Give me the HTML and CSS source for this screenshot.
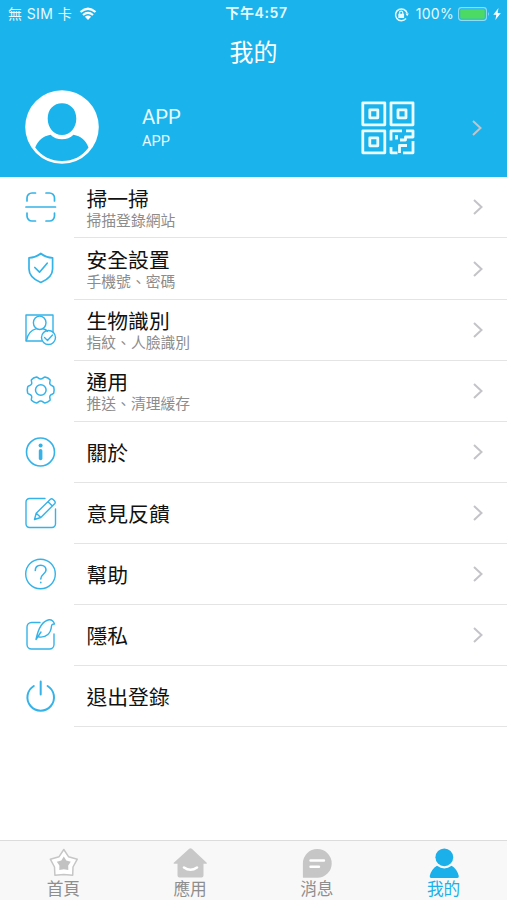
FILE: index.html
```html
<!DOCTYPE html>
<html lang="zh-Hant">
<head>
<meta charset="utf-8">
<meta name="viewport" content="width=device-width, initial-scale=1">
<title>我的</title>
<link rel="stylesheet" href="styles.css">
</head>
<body>
<div class="app">
  <header class="header">
    <div class="status">
      <div class="status-left">
        <span class="carrier">無 SIM 卡</span>
        <svg class="wifi" viewBox="0 0 18 14"><path d="M1.500 5Q9-1.500 16.500 5M4 8Q9 3.800 14 8" fill="none" stroke="currentColor" stroke-width="2.200"/><path d="M5.900 9.800Q9 7.300 12.100 9.800L9 13z" fill="currentColor"/></svg>
      </div>
      <div class="status-time">下午4:57</div>
      <div class="status-right">
        <svg class="lock" viewBox="0 0 14 14"><path d="M12.300 6A5.500 5.500 0 1 0 11.200 10.800" fill="none" stroke="currentColor" stroke-width="1.400"/><path d="M10.700 6h3.200l-1.600 2.700zM4 6.300h5.400v4H4z" fill="currentColor"/><path d="M5.200 7V5.300a1.500 1.500 0 0 1 3 0V7" fill="none" stroke="currentColor" stroke-width="1.100"/></svg>
        <span class="percent">100%</span>
        <svg class="battery" viewBox="0 0 32 14"><rect x=".6" y=".6" width="27.800" height="12.800" rx="2.800" fill="none" stroke="#8fdcf8" stroke-width="1.100"/><rect x="2.200" y="2.200" width="24.600" height="9.600" rx="1.200" fill="#4cd964"/><path d="M30 4.800q1.800 2.200 0 4.400z" fill="#8fdcf8"/></svg>
        <svg class="bolt" viewBox="0 0 8 12"><path d="M5.500 0L.3 6.700h3L2.400 12 7.800 5H4.600z" fill="currentColor"/></svg>
      </div>
    </div>
    <h1 class="page-title">我的</h1>
    <div class="profile">
      <svg class="avatar" viewBox="0 0 74 74"><circle cx="37" cy="37" r="36.800" fill="#fff"/><path d="M37 13.200c8.300 0 14.300 6 14.300 15.300S45.200 45 37 45s-14.300-7.200-14.300-16.500S28.700 13.200 37 13.200zM25.500 44.700C28.500 48 32.500 49.300 37 49.300s8.500-1.300 11.500-4.600C56 46 61 50.500 63.500 57.500 57 66.500 48 71 37 71S17 66.500 10.200 57.500C13 50.500 18 46 25.500 44.700z" fill="#1bb3ec"/></svg>
      <div class="profile-text">
        <div class="profile-name">APP</div>
        <div class="profile-sub">APP</div>
      </div>
      <svg class="qr" viewBox="0 0 54 54" fill="none" stroke="#eafcff" stroke-width="2.800" stroke-linejoin="round"><rect x="1.800" y="1.800" width="22" height="22"/><rect x="8.800" y="8.800" width="8" height="8"/><rect x="30" y="1.800" width="22" height="22"/><rect x="37" y="8.800" width="8" height="8"/><rect x="1.800" y="29.800" width="22" height="22"/><rect x="8.800" y="36.800" width="8" height="8"/><path d="M41 29.800H30V39.500M35.500 34v4.500M45 29.800h7V36h-7.500v3H39M52 40v11.800H42M30 46v5.800h6.500M38.500 52V44.500H46"/></svg>
      <svg class="chevron" viewBox="0 0 10 16"><path d="M1 1l7.500 7L1 15"/></svg>
    </div>
  </header>

  <main class="menu">
    <div class="row">
      <svg class="icon" viewBox="0 0 36 36"><path d="M3 18h29.500" stroke-width="1.700"/><path d="M4 12V9a5 5 0 0 1 5-5h3.500M23 4h3.500a5 5 0 0 1 5 5v3M4 24v3a5 5 0 0 0 5 5h3.500M23 32h3.500a5 5 0 0 0 5-5v-3" stroke-width="1.700"/></svg>
      <div class="row-body"><div class="labels"><div class="label">掃一掃</div><div class="sub">掃描登錄網站</div></div><svg class="chevron" viewBox="0 0 10 16"><path d="M1 1l7.500 7L1 15"/></svg></div>
    </div>
    <div class="row">
      <svg class="icon" viewBox="0 0 36 36"><path d="M17.800 3.500C14 6.500 10 7.700 6 7.800V19c0 6.500 4.500 10.500 11.800 13.500C25 29.500 29.600 25.500 29.600 19V7.800C25.500 7.700 21.500 6.500 17.800 3.500z" stroke-width="1.700"/><path d="M11.800 17.500l4.700 4.700 7.700-9" stroke-width="1.700"/></svg>
      <div class="row-body"><div class="labels"><div class="label">安全設置</div><div class="sub">手機號、密碼</div></div><svg class="chevron" viewBox="0 0 10 16"><path d="M1 1l7.500 7L1 15"/></svg></div>
    </div>
    <div class="row">
      <svg class="icon" viewBox="0 0 36 36"><path d="M19 30H3V4h27v17"/><ellipse cx="16.700" cy="11.800" rx="6.300" ry="6.700"/><path d="M3.500 29.500C4.500 22.500 8 19.300 13.500 17.700M20 17.700q3 .8 4.500 2.500"/><circle cx="25.500" cy="26.500" r="7"/><path d="M21.500 26.500l3 3 5-5.500"/></svg>
      <div class="row-body"><div class="labels"><div class="label">生物識別</div><div class="sub">指紋、人臉識別</div></div><svg class="chevron" viewBox="0 0 10 16"><path d="M1 1l7.500 7L1 15"/></svg></div>
    </div>
    <div class="row">
      <svg class="icon" viewBox="0 0 36 36"><path d="M13.500 5C15 5 15.500 7 17.700 7S20.500 5 22 5C24 5.400 26 6.500 27 7.700 27.700 9 26 10.500 27 12.200S30 13.500 30.700 14.800C31.300 17 31.300 19 30.700 21.200 30 22.500 28 22 27 23.800S27.700 27 27 28.300C26 29.500 24 30.600 22 31 20.500 31 19.900 29 17.700 29S15 31 13.500 31C11.500 30.600 9.500 29.500 8.500 28.300 7.700 27 9.500 25.500 8.500 23.800S5.500 22.500 4.700 21.200C4.100 19 4.100 17 4.700 14.800 5.500 13.500 7.500 14 8.500 12.200S7.700 9 8.500 7.700C9.500 6.500 11.500 5.400 13.500 5z" stroke-width="1.500"/><circle cx="17.800" cy="18" r="5.300" stroke-width="1.500"/></svg>
      <div class="row-body"><div class="labels"><div class="label">通用</div><div class="sub">推送、清理緩存</div></div><svg class="chevron" viewBox="0 0 10 16"><path d="M1 1l7.500 7L1 15"/></svg></div>
    </div>
    <div class="row">
      <svg class="icon" viewBox="0 0 36 36"><circle cx="17.500" cy="18" r="14" stroke-width="1.600"/><circle cx="17.600" cy="11.500" r="2" fill="#2fb3e8" stroke="none"/><path d="M17.600 16.800v7.700" stroke-width="3.600"/></svg>
      <div class="row-body"><div class="labels"><div class="label">關於</div></div><svg class="chevron" viewBox="0 0 10 16"><path d="M1 1l7.500 7L1 15"/></svg></div>
    </div>
    <div class="row">
      <svg class="icon" viewBox="0 0 36 36"><path d="M22 3.500H6.500A3.500 3.500 0 0 0 3 7v22a3.500 3.500 0 0 0 3.500 3.500H29a3.500 3.500 0 0 0 3.500-3.500V14"/><path d="M11.500 24.500l1.700-6.300L27.400 4.300q1.300-1 2.700.2l1.500 1.600q1.200 1.300 0 2.600L17.800 22.500zM13.200 18.200l4.600 4.300M25 6.700l4.400 4.200"/></svg>
      <div class="row-body"><div class="labels"><div class="label">意見反饋</div></div><svg class="chevron" viewBox="0 0 10 16"><path d="M1 1l7.500 7L1 15"/></svg></div>
    </div>
    <div class="row">
      <svg class="icon" viewBox="0 0 36 36"><circle cx="17.500" cy="18" r="14.800"/><path d="M12.300 14.500c0-3.300 2.200-5.300 5.400-5.300s5.300 2 5.300 4.700c0 4-5.200 4.300-5.200 9M17.800 26.200v.6" stroke-width="1.600"/></svg>
      <div class="row-body"><div class="labels"><div class="label">幫助</div></div><svg class="chevron" viewBox="0 0 10 16"><path d="M1 1l7.500 7L1 15"/></svg></div>
    </div>
    <div class="row">
      <svg class="icon" viewBox="0 0 36 36"><path d="M17 5.500H8.500A4.500 4.500 0 0 0 4 10v17.500A4.500 4.500 0 0 0 8.500 32h18a4.500 4.500 0 0 0 4.500-4.500V17"/><path d="M13 22.500C15 13 19 4 26 2.800q4-.3 5.500 4.200-2.700-.2-3 2C28 16 23.500 21 16 20M13 22.500L18 15"/></svg>
      <div class="row-body"><div class="labels"><div class="label">隱私</div></div><svg class="chevron" viewBox="0 0 10 16"><path d="M1 1l7.500 7L1 15"/></svg></div>
    </div>
    <div class="row">
      <svg class="icon" viewBox="0 0 36 36"><path d="M10.800 8A13.300 13.300 0 1 0 24.600 8M17.700 3.500v13" stroke-width="2"/></svg>
      <div class="row-body"><div class="labels"><div class="label">退出登錄</div></div></div>
    </div>
  </main>

  <nav class="tabs">
    <div class="tab">
      <svg class="tab-icon" viewBox="0 0 34 32"><path d="M17.800 2.500L22.500 9.700 31.300 12.200 27 20 26.700 28.300 17.800 27.500 8.900 28.300 8.500 20 4.300 12.200 13.100 9.700z" fill="#fff" stroke="#c6c6c6" stroke-width="1.500" stroke-linejoin="round"/><path d="M17.800 9.500l2.500 3.900 4.500 1.300-2.600 3.900.1 4.500-4.500-.9-4.500.9.100-4.500-2.600-3.900 4.500-1.300z" fill="#c2c2c2"/></svg>
      <span>首頁</span>
    </div>
    <div class="tab">
      <svg class="tab-icon" viewBox="0 0 34 32"><path d="M16.200 1.700q1.300-1 2.600 0L34 16q0 .8-.8.800h-2.700v11.700q0 2-2 2h-22q-2 0-2-2V16.800H1.300q-.8 0-.8-.8z" fill="#c8c8c8"/><path d="M11 20.500q6.500 4.500 13 0" fill="none" stroke="#fff" stroke-width="2.600" stroke-linecap="round"/></svg>
      <span>應用</span>
    </div>
    <div class="tab">
      <svg class="tab-icon" viewBox="0 0 34 32"><path d="M17.300 2A14.400 14.400 0 1 1 17.300 30.800H3.400q-.5 0-.5-.5V16.400A14.400 14.400 0 0 1 17.300 2z" fill="#c6c6c6"/><path d="M10.500 13.500H24M10.500 19.700h8.500" stroke="#fff" stroke-width="2.400" stroke-linecap="round"/></svg>
      <span>消息</span>
    </div>
    <div class="tab active">
      <svg class="tab-icon" viewBox="0 0 34 32"><circle cx="17.300" cy="10.300" r="8.900" fill="#1bb0e9"/><path d="M10 18.800Q17.300 24 24.600 18.800 30 22 31.800 29q.2 2-1.500 2H4.200q-1.700 0-1.500-2Q4.500 22 10 18.800z" fill="#1bb0e9"/></svg>
      <span>我的</span>
    </div>
  </nav>
</div>
</body>
</html>
```
FILE: styles.css
```css
* { box-sizing: border-box; }
body {
  margin: 0;
  background: #fff;
  font-family: "Noto Sans CJK TC", "Noto Sans", sans-serif;
  color: #111;
}
svg { display: block; flex: none; }
.app {
  width: 507px;
  height: 900px;
  display: flex;
  flex-direction: column;
  overflow: hidden;
}
.header {
  height: 177px;
  flex: none;
  background: #1bb3ec;
  color: #fff;
}
.status {
  height: 28px;
  display: grid;
  grid-template-columns: 1fr auto 1fr;
  align-items: center;
  padding: 0 6px 0 8px;
  font-family: Inter, "Noto Sans CJK TC", sans-serif;
  font-size: 14px;
  line-height: 20px;
  color: #e6faff;
}
.status-left, .status-right { display: flex; align-items: center; height: 26px; }
.status-right { justify-content: flex-end; }
.carrier { letter-spacing: 0.4px; }
.wifi { width: 18px; height: 14px; margin-left: 7px; color: #fff; }
.status-time { font-weight: 600; letter-spacing: 0.6px; margin: -2px 0 0 4px; }
.lock { width: 15px; height: 15px; margin-right: 7px; }
.percent { letter-spacing: 0.3px; }
.battery { width: 32px; height: 14px; margin-left: 4px; }
.bolt { width: 8px; height: 12px; margin-left: 3px; color: #fff; }
.page-title {
  margin: 0;
  height: 45px;
  line-height: 45px;
  font-size: 24px;
  font-weight: 400;
  text-align: center;
}
.profile {
  height: 104px;
  display: flex;
  align-items: center;
  padding: 5px 25px 0 25px;
}
.avatar { width: 74px; height: 74px; margin-bottom: 1px; }
.profile-text {
  flex: 1;
  padding: 1px 0 0 43px;
  font-family: Roboto, sans-serif;
  color: #e6faff;
}
.profile-name { font-size: 20.3px; line-height: 26px; }
.profile-sub { font-size: 14.6px; line-height: 23px; }
.qr { width: 54px; height: 54px; margin: 1px 57px 0 0; }
.chevron {
  width: 10px;
  height: 16px;
  fill: none;
  stroke: #c4c4c8;
  stroke-width: 2;
}
.menu { flex: 1; padding-top: 0.4px; }
.row { height: 61.1px; display: flex; align-items: center; }
.icon {
  width: 36px;
  height: 36px;
  margin: 0 15px 1.5px 23px;
  fill: none;
  stroke: #35b3e8;
  stroke-width: 1.4;
  stroke-linecap: round;
  stroke-linejoin: round;
}
.row-body {
  flex: 1;
  height: 100%;
  display: flex;
  align-items: center;
  justify-content: space-between;
  padding: 0 24.5px 0 12.5px;
  border-bottom: 1px solid #e4e4e4;
}
.label { font-size: 20.8px; line-height: 24px; }
.sub { font-size: 14.8px; line-height: 19px; color: #8c8c8c; }
.tabs {
  height: 60px;
  flex: none;
  display: grid;
  grid-template-columns: repeat(4, 1fr);
  background: #f8f8f8;
  border-top: 1px solid #dcdcdc;
}
.tab {
  display: flex;
  flex-direction: column;
  align-items: center;
  padding-top: 6px;
  font-size: 16.7px;
  line-height: 18px;
  color: #8e8e8e;
}
.tab-icon { width: 34px; height: 32px; }
.active { color: #1bb0e9; }
```
